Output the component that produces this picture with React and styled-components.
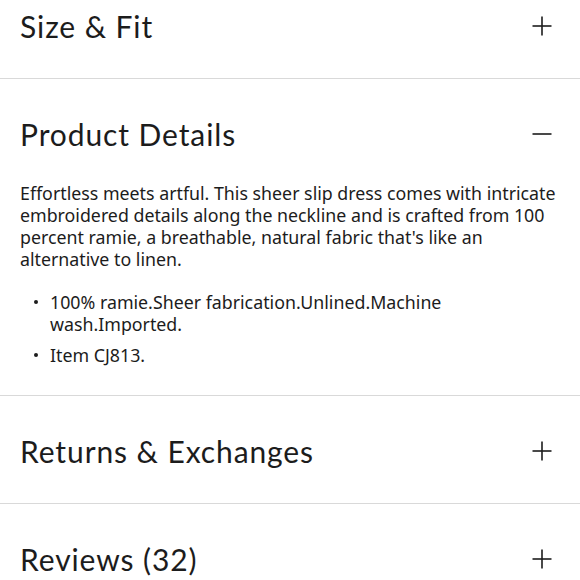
import React, { useState } from 'react';
import styled, { createGlobalStyle } from 'styled-components';

const GlobalStyle = createGlobalStyle`
  html, body {
    margin: 0;
    padding: 0;
    background: #fff;
    overflow: hidden;
  }
  body {
    font-family: "Noto Sans", "Open Sans", "Liberation Sans", sans-serif;
    color: #1c1c1c;
    -webkit-font-smoothing: antialiased;
  }
`;

const Accordion = styled.div`
  width: 580px;
  margin-top: -29px;
`;

const Section = styled.section`
  border-bottom: 1px solid #d9d9d9;
`;

const Header = styled.button`
  display: flex;
  align-items: center;
  justify-content: space-between;
  width: 100%;
  padding: 38px 28px 35px 20px;
  margin: 0;
  border: 0;
  background: none;
  font: inherit;
  color: inherit;
  cursor: pointer;
  text-align: left;
`;

const Title = styled.h2`
  margin: 0;
  font-family: Lato, "Noto Sans", sans-serif;
  font-size: 30px;
  font-weight: 400;
  line-height: 34px;
  letter-spacing: 0.9px;
`;

const Body = styled.div`
  padding: 0 20px 29px 20px;
  margin-top: -4px;
  font-size: 17.8px;
  line-height: 22px;
`;

const Paragraph = styled.p`
  margin: 0 0 21px 0;
`;

const List = styled.ul`
  margin: 0;
  padding: 0;
  list-style: none;
  display: flex;
  flex-direction: column;
  gap: 9px;
`;

const Item = styled.li`
  position: relative;
  padding-left: 30px;
  padding-right: 10px;

  &::before {
    content: '';
    position: absolute;
    left: 14px;
    top: 9px;
    width: 4px;
    height: 4px;
    border-radius: 50%;
    background: #1c1c1c;
  }
`;

const Toggle = ({ open }) => (
  <svg width="20" height="20" viewBox="0 0 20 20" fill="none" stroke="#1c1c1c" strokeWidth="1.6">
    <line x1="0.5" y1="10" x2="19.5" y2="10" />
    {!open && <line x1="10" y1="0.5" x2="10" y2="19.5" />}
  </svg>
);

const sections = [
  { title: 'Size & Fit' },
  {
    title: 'Product Details',
    text: "Effortless meets artful. This sheer slip dress comes with intricate embroidered details along the neckline and is crafted from 100 percent ramie, a breathable, natural fabric that's like an alternative to linen.",
    bullets: ['100% ramie.Sheer fabrication.Unlined.Machine wash.Imported.', 'Item CJ813.'],
  },
  { title: 'Returns & Exchanges' },
  { title: 'Reviews (32)' },
];

export default function App() {
  const [open, setOpen] = useState(1);

  return (
    <>
      <GlobalStyle />
      <Accordion>
        {sections.map((s, i) => (
          <Section key={s.title}>
            <Header onClick={() => setOpen(open === i ? -1 : i)}>
              <Title>{s.title}</Title>
              <Toggle open={open === i} />
            </Header>
            {open === i && s.text && (
              <Body>
                <Paragraph>{s.text}</Paragraph>
                <List>
                  {s.bullets.map(b => (
                    <Item key={b}>{b}</Item>
                  ))}
                </List>
              </Body>
            )}
          </Section>
        ))}
      </Accordion>
    </>
  );
}
